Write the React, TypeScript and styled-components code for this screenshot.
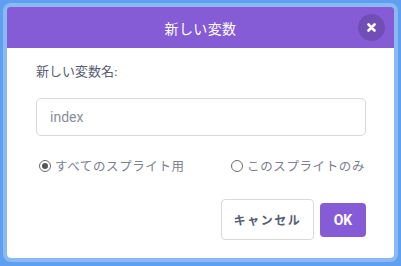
import React from "react";
import styled, { createGlobalStyle } from "styled-components";

const Global = createGlobalStyle`
  html, body { margin: 0; padding: 0; }
  body {
    background: #5e9ff0;
    font-family: "Noto Sans CJK JP", "Noto Sans", sans-serif;
    width: 401px;
    height: 266px;
    overflow: hidden;
  }
`;

const Stage = styled.div`
  padding: 3px 3px 4px 3px;
  box-sizing: border-box;
  width: 401px;
  height: 266px;
`;

const Modal = styled.div`
  box-sizing: border-box;
  height: 259px;
  border: 4px solid rgba(255, 255, 255, 0.28);
  border-radius: 8px;
  overflow: hidden;
  display: flex;
  flex-direction: column;
  background-clip: padding-box;
`;

const Header = styled.div`
  position: relative;
  height: 41px;
  flex: none;
  background: #855cd6;
  display: flex;
  align-items: center;
  justify-content: center;
  color: #fff;
  font-size: 14px;
  letter-spacing: 0.4px;
`;

const Close = styled.div`
  position: absolute;
  right: 9px;
  top: 7px;
  width: 27px;
  height: 27px;
  border-radius: 50%;
  background: rgba(0, 0, 0, 0.15);
  display: flex;
  align-items: center;
  justify-content: center;
`;

const Body = styled.div`
  flex: 1;
  background: #fff;
  padding: 14px 28px 0 29px;
  display: flex;
  flex-direction: column;
`;

const Label = styled.div`
  color: #575e75;
  font-size: 13px;
  line-height: 20px;
  font-family: "Liberation Serif", "Noto Sans CJK JP", serif;
`;

const Input = styled.div`
  margin-top: 16px;
  height: 38px;
  box-sizing: border-box;
  border: 1px solid #d9d9d9;
  border-radius: 5px;
  display: flex;
  align-items: center;
  padding-left: 13px;
  color: #8a8e99;
  font-family: Roboto, "Liberation Sans", sans-serif;
  font-size: 14px;
`;

const Options = styled.div`
  margin-top: 21px;
  display: flex;
  justify-content: space-between;
  align-items: center;
  padding-left: 3px;
  padding-right: 1px;
`;

const Option = styled.label`
  display: flex;
  align-items: center;
  gap: 4px;
  color: #7c8091;
  font-size: 12.5px;
  letter-spacing: 0.6px;
  line-height: 18px;
`;

const Radio = styled.span<{ $checked?: boolean }>`
  width: 12px;
  height: 12px;
  box-sizing: border-box;
  border-radius: 50%;
  border: 1.5px solid #6b6b6b;
  display: flex;
  align-items: center;
  justify-content: center;
  &::after {
    content: "";
    display: ${(p) => (p.$checked ? "block" : "none")};
    width: 6px;
    height: 6px;
    border-radius: 50%;
    background: #555;
  }
`;

const Buttons = styled.div`
  margin-top: 24px;
  display: flex;
  justify-content: flex-end;
  align-items: center;
  gap: 6px;
`;

const Button = styled.div<{ $primary?: boolean }>`
  box-sizing: border-box;
  display: flex;
  align-items: center;
  justify-content: center;
  border-radius: 4px;
  font-weight: bold;
  ${(p) =>
    p.$primary
      ? `
    width: 46px;
    height: 34px;
    background: #855cd6;
    color: #fff;
    font-family: Roboto, "Liberation Sans", sans-serif;
    font-size: 14px;
  `
      : `
    width: 93px;
    height: 41px;
    background: #fff;
    border: 1px solid #d9d9d9;
    color: #575e75;
    font-size: 12px;
    letter-spacing: 1.5px;
  `}
`;

export default function App() {
  return (
    <>
      <Global />
      <Stage>
        <Modal>
          <Header>
            新しい変数
            <Close>
              <svg width="9" height="9" viewBox="0 0 9 9">
                <path
                  d="M1.5 1.5 L7.5 7.5 M7.5 1.5 L1.5 7.5"
                  stroke="#fff"
                  strokeWidth="2.6"
                  strokeLinecap="round"
                />
              </svg>
            </Close>
          </Header>
          <Body>
            <Label>新しい変数名:</Label>
            <Input>index</Input>
            <Options>
              <Option>
                <Radio $checked />
                すべてのスプライト用
              </Option>
              <Option>
                <Radio />
                このスプライトのみ
              </Option>
            </Options>
            <Buttons>
              <Button>キャンセル</Button>
              <Button $primary>OK</Button>
            </Buttons>
          </Body>
        </Modal>
      </Stage>
    </>
  );
}
